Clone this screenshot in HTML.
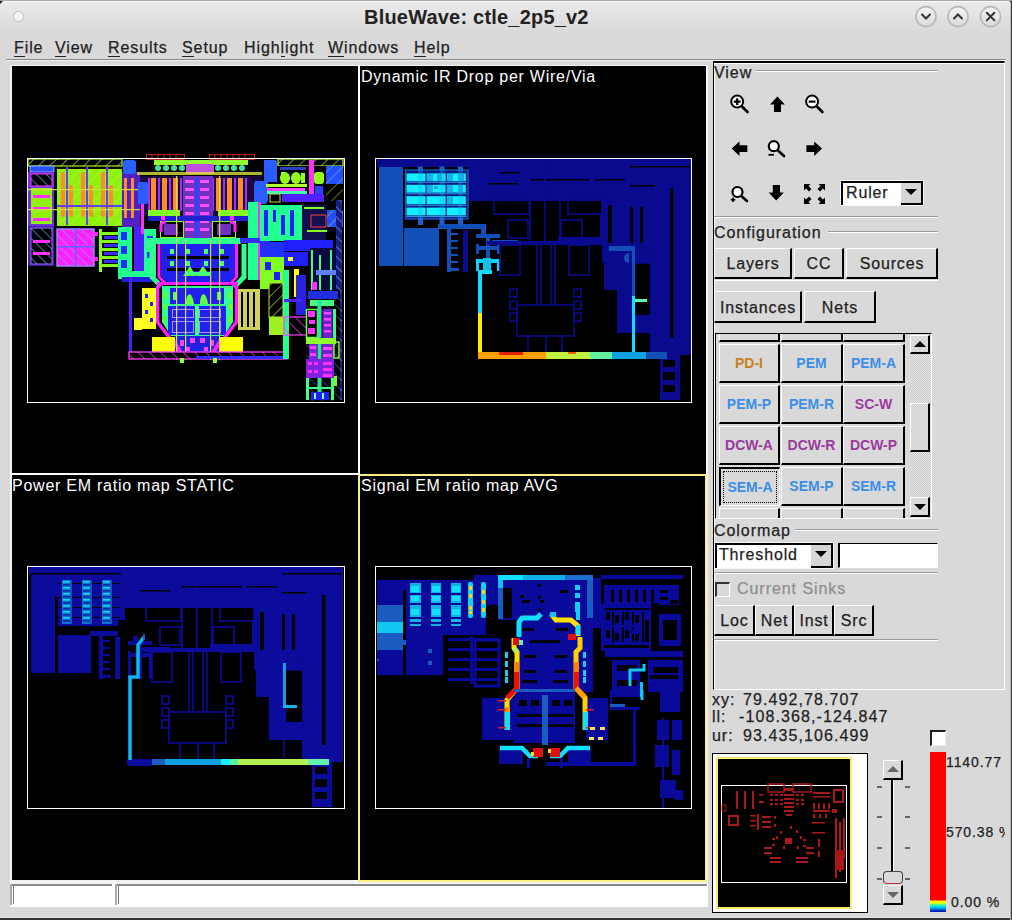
<!DOCTYPE html>
<html><head><meta charset="utf-8">
<style>
*{box-sizing:border-box}
html,body{margin:0;padding:0}
body{width:1012px;height:920px;position:relative;overflow:hidden;background:#d9d9d9;font-family:"Liberation Sans",sans-serif;color:#1e1e1e}
.a{position:absolute}
#title{left:0;top:0;width:1012px;height:35px;background:linear-gradient(#ebebeb,#d8d8d8);border-top-left-radius:6px;border-top-right-radius:6px}
.tb{position:absolute;top:6px;width:21px;height:21px;border-radius:50%;border:1px solid #b4b4b4;background:linear-gradient(#f4f4f4,#dcdcdc)}
.menu{position:absolute;top:39px;font-size:16px;letter-spacing:0.9px;color:#222}
.menu u{text-decoration:none;border-bottom:1.5px solid #222}
.lbl{position:absolute;color:#fff;font-size:16px;letter-spacing:0.75px;white-space:nowrap}

.t{position:absolute;font-size:16px;letter-spacing:0.95px;color:#222;white-space:nowrap;line-height:18px}
.groove{position:absolute;height:2px;border-top:1px solid #9a9a9a;border-bottom:1px solid #fff}
.sep{position:absolute;height:2px;border-top:1px solid #9a9a9a;border-bottom:1px solid #fff}
.btn{position:absolute;background:#d9d9d9;border-top:1px solid #fff;border-left:1px solid #fff;border-right:2px solid #000;border-bottom:2px solid #000;font-size:16px;letter-spacing:0.85px;color:#222;text-align:center;white-space:nowrap;display:flex;align-items:center;justify-content:center;padding-left:1px;padding-top:2px}
.combo{position:absolute;background:#fff;border-top:2px solid #000;border-left:2px solid #000;border-right:2px solid #000;box-shadow:0 0 0 1px #f8f8f8}
.combo span{position:absolute;top:2px;font-size:16px;letter-spacing:0.85px;color:#222;white-space:nowrap}
.dd{position:absolute;right:0;top:0;width:20px;bottom:0;background:#d6d6d6;border-bottom:2px solid #000}
.dd:after{content:"";position:absolute;left:4px;top:6px;border-left:6px solid transparent;border-right:6px solid transparent;border-top:6px solid #000}

.gb{position:absolute;background:#d9d9d9;border-top:1px solid #fff;border-left:1px solid #fff;border-right:2px solid #000;border-bottom:2px solid #000;font-weight:bold;font-size:14px;letter-spacing:0px;display:flex;align-items:center;justify-content:center;white-space:nowrap}
.gb.sunk{border-top:2px solid #000;border-left:2px solid #000;border-right:1px solid #fff;border-bottom:1px solid #fff}
.focus{position:absolute;left:2px;top:2px;right:2px;bottom:2px;border:1px dotted #000}
.trough{background:repeating-conic-gradient(#c4c4c4 0 25%,#ececec 0 50%) 0 0/2px 2px}
.sbb{background:#d9d9d9;border-top:1px solid #fff;border-left:1px solid #fff;border-right:2px solid #000;border-bottom:2px solid #000}
.up:after,.down:after{content:"";position:absolute;left:3px;border-left:6px solid transparent;border-right:6px solid transparent}
.up:after{top:5px;border-bottom:6px solid #000}
.down:after{top:6px;border-top:6px solid #000}
.up.g:after{border-bottom-color:#666}.down.g:after{border-top-color:#666}
.tick{position:absolute;width:5px;height:2px;background:#666}
.t,.btn,.menu,.combo span{-webkit-text-stroke:0.25px currentColor}
</style></head><body>
<div id="title" class="a">
  <div class="a" style="left:13px;top:11px;width:11px;height:11px;border-radius:50%;background:#f6f6f6;border:1.5px solid #bdbdbd"></div>
  <div class="a" style="left:364px;top:6px;font-weight:bold;font-size:20px;letter-spacing:0.2px;color:#222;white-space:nowrap">BlueWave: ctle_2p5_v2</div>
  <svg class="a" style="left:900px;top:0" width="112" height="35" viewBox="900 0 112 35">
 <defs><linearGradient id="bg1" x1="0" y1="0" x2="0" y2="1"><stop offset="0" stop-color="#f6f6f6"/><stop offset="1" stop-color="#dadada"/></linearGradient></defs>
 <g stroke="#b8b8b8" stroke-width="1.6" fill="url(#bg1)">
  <circle cx="926" cy="16.6" r="10"/><circle cx="958" cy="16.6" r="10"/><circle cx="990.6" cy="16.6" r="10"/>
 </g>
 <g stroke="#333" stroke-width="2" fill="none" stroke-linecap="round">
  <path d="M922 14.5 L926 18.5 L930 14.5"/>
  <path d="M954 18.5 L958 14.5 L962 18.5"/>
  <path d="M986.8 12.8 L994.4 20.4 M994.4 12.8 L986.8 20.4"/>
 </g>
</svg>
</div>
<div class="menu" style="left:14px"><u>F</u>ile</div>
<div class="menu" style="left:55px"><u>V</u>iew</div>
<div class="menu" style="left:108px"><u>R</u>esults</div>
<div class="menu" style="left:182px"><u>S</u>etup</div>
<div class="menu" style="left:244px">High<u>l</u>ight</div>
<div class="menu" style="left:328px"><u>W</u>indows</div>
<div class="menu" style="left:414px"><u>H</u>elp</div>
<div class="a" style="left:6px;top:59px;width:1000px;height:1px;background:#8a8a8a"></div>
<div class="a" style="left:6px;top:60px;width:1000px;height:1px;background:#f4f4f4"></div>

<!-- canvas -->
<div class="a" style="left:10px;top:65px;width:698px;height:819px;background:#f4f4f4"></div>
<div class="a" style="left:12px;top:66px;width:694px;height:814px;background:#000"></div>
<div class="a" style="left:358px;top:65px;width:2px;height:409px;background:#fff"></div>
<div class="a" style="left:11px;top:473px;width:349px;height:2px;background:#fff"></div>
<div class="a" style="left:706px;top:65px;width:1px;height:409px;background:#fff"></div>
<div class="a" style="left:358px;top:474px;width:349px;height:408px;border:2px solid #f8f080"></div>
<div class="lbl" style="left:361px;top:68px">Dynamic IR Drop per Wire/Via</div>
<div class="lbl" style="left:12px;top:477px">Power EM ratio map STATIC</div>
<div class="lbl" style="left:361px;top:477px">Signal EM ratio map AVG</div>

<!--CHIP1--><svg class="a" style="left:12px;top:66px" width="346" height="407" viewBox="12 66 346 407">
<defs>
<pattern id="h1" width="8" height="8" patternUnits="userSpaceOnUse" patternTransform="rotate(45)"><rect width="8" height="8" fill="none"/><path d="M0 0v8" stroke="#b0ff30" stroke-width="1.2"/></pattern>
<pattern id="h2" width="7" height="7" patternUnits="userSpaceOnUse" patternTransform="rotate(-45)"><path d="M0 0v7" stroke="#60c0ff" stroke-width="1.2"/></pattern>
<pattern id="h3" width="8" height="8" patternUnits="userSpaceOnUse" patternTransform="rotate(-45)"><path d="M0 0v8" stroke="#ff40ff" stroke-width="1.3"/></pattern>
</defs>
<!-- red outlines above -->
<g fill="none" stroke="#c02020" stroke-width="1">
<rect x="146.5" y="154.5" width="38" height="5"/><rect x="209.5" y="154.5" width="45" height="5"/>
<path d="M152 154v5M158 154v5M164 154v5M170 154v5M176 154v5M215 154v5M221 154v5M227 154v5M233 154v5M239 154v5M245 154v5"/>
</g>
<!-- LEFT TOP BLOCK -->
<rect x="28" y="159" width="94" height="7" fill="#000" stroke="#a0f020" stroke-width="1.2"/>
<rect x="28" y="159" width="94" height="7" fill="url(#h1)"/>
<rect x="30" y="166" width="24" height="6" fill="#2a50ff" stroke="#a0c0ff" stroke-width="0.8"/>
<rect x="28" y="172" width="26" height="54" fill="#7030e0"/>
<rect x="31" y="174" width="21" height="12" fill="#000" stroke="#ff30ff"/>
<rect x="31" y="174" width="21" height="12" fill="url(#h2)"/>
<rect x="31" y="188" width="21" height="36" fill="#90f010"/>
<rect x="33" y="195" width="17" height="3" fill="#ff30ff"/><rect x="33" y="207" width="17" height="3" fill="#ff30ff"/><rect x="33" y="218" width="17" height="3" fill="#ff30ff"/>
<rect x="28" y="226" width="26" height="40" fill="#4020a0"/>
<rect x="31" y="228" width="21" height="36" fill="#000" stroke="#a060ff"/>
<rect x="31" y="228" width="21" height="36" fill="url(#h2)"/>
<rect x="33" y="240" width="17" height="3" fill="#ff30ff"/><rect x="33" y="252" width="17" height="3" fill="#ff30ff"/>
<!-- fingers -->
<rect x="57" y="169" width="65" height="57" fill="#90f010"/>
<rect x="57" y="169" width="65" height="57" fill="url(#h1)"/>
<g fill="#ff8a30">
<rect x="61" y="172" width="4" height="45" rx="2"/><rect x="69" y="185" width="4" height="32" rx="2"/>
<rect x="81" y="172" width="4" height="45" rx="2"/><rect x="89" y="185" width="4" height="32" rx="2"/>
<rect x="101" y="172" width="4" height="45" rx="2"/><rect x="109" y="185" width="4" height="32" rx="2"/>
</g>
<g fill="#6040ff"><rect x="66" y="167" width="2" height="58"/><rect x="86" y="167" width="2" height="58"/><rect x="106" y="167" width="2" height="58"/><rect x="57" y="205" width="65" height="2"/></g>
<rect x="122" y="172" width="18" height="55" fill="#5020c0"/>
<rect x="124" y="178" width="3" height="40" fill="#ff8a30"/><rect x="131" y="178" width="3" height="40" fill="#ff8a30"/>
<rect x="28" y="189" width="112" height="1.2" fill="#d0e040"/><rect x="28" y="209" width="112" height="1.2" fill="#d0e040"/>
<!-- magenta square -->
<rect x="57" y="229" width="37" height="37" fill="#ff20ff" stroke="#a080ff" stroke-width="1.5"/>
<rect x="57" y="229" width="37" height="37" fill="url(#h2)"/>
<rect x="75" y="229" width="1.5" height="37" fill="#6060ff"/><rect x="57" y="246" width="37" height="1.5" fill="#6060ff"/>
<rect x="94" y="232" width="4" height="4" fill="#ff20ff"/><rect x="94" y="257" width="4" height="4" fill="#ff20ff"/>
<!-- horizontal fingers -->
<g fill="#80ff20"><rect x="99" y="229" width="3" height="43"/><rect x="99" y="232" width="20" height="3"/><rect x="99" y="240" width="20" height="3"/><rect x="99" y="248" width="20" height="3"/><rect x="99" y="256" width="20" height="3"/><rect x="99" y="264" width="20" height="3"/></g>
<g fill="#3030ff"><rect x="104" y="236" width="14" height="3"/><rect x="104" y="244" width="14" height="3"/><rect x="104" y="252" width="14" height="3"/><rect x="104" y="260" width="14" height="3"/></g>
<rect x="118" y="227" width="14" height="52" fill="#20ff90"/>
<rect x="121" y="232" width="6" height="8" fill="#2030ff"/><rect x="121" y="246" width="6" height="8" fill="#2030ff"/><rect x="121" y="260" width="6" height="8" fill="#2030ff"/>
<rect x="134" y="227" width="10" height="50" fill="#4a20ff"/>
<rect x="144" y="229" width="12" height="48" fill="#20ff90"/>
<rect x="147" y="236" width="6" height="6" fill="#3030ff"/><rect x="147" y="252" width="6" height="6" fill="#3030ff"/>
<rect x="120" y="271" width="36" height="6" fill="#20ff90"/>
<rect x="122" y="277" width="30" height="5" fill="#2020e0"/>
<!-- CENTER TOP -->
<rect x="123" y="160" width="13" height="14" fill="#2a60ff" rx="3"/>
<rect x="264" y="160" width="13" height="14" fill="#2a60ff" rx="3"/>
<rect x="137" y="160" width="126" height="12" fill="#000"/>
<g fill="#90ff30"><rect x="154" y="160" width="94" height="5"/></g>
<g fill="#40e0a0"><circle cx="158" cy="168" r="3"/><circle cx="166" cy="168" r="3"/><circle cx="174" cy="168" r="3"/><circle cx="182" cy="168" r="3"/><circle cx="218" cy="168" r="3"/><circle cx="226" cy="168" r="3"/><circle cx="234" cy="168" r="3"/><circle cx="242" cy="168" r="3"/></g>
<rect x="186" y="164" width="28" height="10" fill="#c050e0"/>
<rect x="137" y="172" width="126" height="3" fill="#e0e040" opacity="0.8"/>
<rect x="140" y="176" width="122" height="40" fill="#1a0a40"/>
<g fill="#ff8a30"><rect x="151" y="178" width="5" height="33"/><rect x="162" y="178" width="5" height="33"/><rect x="173" y="178" width="5" height="33"/><rect x="216" y="178" width="5" height="33"/><rect x="227" y="178" width="5" height="33"/><rect x="238" y="178" width="5" height="33"/></g>
<g fill="#a030ff"><rect x="148" y="178" width="2" height="33"/><rect x="158" y="178" width="2" height="33"/><rect x="169" y="178" width="2" height="33"/><rect x="180" y="178" width="2" height="33"/><rect x="212" y="178" width="2" height="33"/><rect x="223" y="178" width="2" height="33"/><rect x="234" y="178" width="2" height="33"/><rect x="245" y="178" width="2" height="33"/></g>
<rect x="138" y="182" width="10" height="22" fill="#2a5cff" rx="2"/>
<rect x="254" y="182" width="13" height="22" fill="#2a5cff" rx="2"/>
<rect x="141" y="204" width="3" height="30" fill="#ff30ff"/>
<rect x="183" y="176" width="30" height="63" fill="#7030c0"/>
<g fill="#ff50ff"><rect x="185" y="180" width="9" height="3"/><rect x="200" y="180" width="9" height="3"/><rect x="185" y="188" width="9" height="3"/><rect x="200" y="188" width="9" height="3"/><rect x="185" y="196" width="9" height="3"/><rect x="200" y="196" width="9" height="3"/><rect x="185" y="204" width="9" height="3"/><rect x="200" y="204" width="9" height="3"/><rect x="185" y="212" width="9" height="3"/><rect x="200" y="212" width="9" height="3"/><rect x="185" y="220" width="9" height="3"/><rect x="200" y="220" width="9" height="3"/><rect x="185" y="228" width="9" height="3"/><rect x="200" y="228" width="9" height="3"/></g>
<rect x="195" y="178" width="4" height="64" fill="#3040ff"/>
<rect x="148" y="210" width="32" height="6" fill="#80ff20"/><rect x="218" y="210" width="32" height="6" fill="#80ff20"/>
<rect x="148" y="216" width="100" height="5" fill="#2020d0"/>
<rect x="161" y="216" width="4" height="4" fill="#ff30ff"/><rect x="230" y="216" width="4" height="4" fill="#ff30ff"/>
<rect x="160.5" y="221.5" width="23" height="16" fill="none" stroke="#80ff20"/><rect x="164" y="224" width="14" height="11" fill="#7030c0"/><path d="M161 232 V226 Q161 222 166 222" stroke="#ff20ff" stroke-width="3" fill="none"/>
<rect x="212.5" y="221.5" width="23" height="16" fill="none" stroke="#80ff20"/><rect x="217" y="224" width="14" height="11" fill="#7030c0"/><path d="M235 232 V226 Q235 222 230 222" stroke="#ff20ff" stroke-width="3" fill="none"/>
<!-- OCTAGON -->
<rect x="146" y="238" width="95" height="6" fill="#30ff90"/>
<path d="M161 244 H235 V276 L229 282 H167 L161 276Z" fill="#2020f0"/>
<g fill="#000"><rect x="167" y="256" width="62" height="3"/><rect x="167" y="268" width="62" height="3"/></g>
<g fill="#50ff60"><rect x="170" y="249" width="4" height="5"/><rect x="186" y="249" width="4" height="5"/><rect x="204" y="249" width="4" height="5"/><rect x="220" y="249" width="4" height="5"/><rect x="170" y="261" width="4" height="5"/><rect x="220" y="261" width="4" height="5"/><rect x="186" y="261" width="4" height="5"/><rect x="204" y="261" width="4" height="5"/></g>
<path d="M183 276 L190 266 L196 276 L203 266 L210 276Z" fill="#60ff40"/>
<rect x="185" y="272" width="26" height="3" fill="#40ff80"/>
<path d="M152 244 V277 L160 285 M244 244 V277 L236 285" fill="none" stroke="#30ff90" stroke-width="5"/>
<path d="M159 244 V277 L166 284 M236.5 244 V277 L230 284" fill="none" stroke="#ff20ff" stroke-width="3"/>
<rect x="157" y="282" width="81" height="3" fill="#ff20ff"/>
<path d="M162 286 H233 V322 L224 336 H171 L162 322Z" fill="#30ff90"/>
<rect x="170" y="288" width="54" height="16" fill="#2020f0"/>
<g fill="#60ff40"><path d="M186 304 C186 292 192 290 194 304Z"/><path d="M200 304 C200 292 206 290 208 304Z"/><rect x="173" y="292" width="4" height="8"/><rect x="217" y="292" width="4" height="8"/></g>
<rect x="168" y="306" width="58" height="29" fill="#2020f0"/>
<g fill="none" stroke="#b090ff" stroke-width="1"><rect x="172.5" y="309.5" width="21" height="8"/><rect x="199.5" y="309.5" width="21" height="8"/><rect x="172.5" y="321.5" width="21" height="11"/><rect x="199.5" y="321.5" width="21" height="11"/></g>
<rect x="195" y="304" width="4" height="31" fill="#40ff80"/>
<path d="M157.5 286 V322 L172 341 M236.5 286 V322 L222 341" fill="none" stroke="#ff20ff" stroke-width="3.5"/>
<path d="M163 283 L157.5 288 M231 283 L236.5 288" stroke="#ff20ff" stroke-width="3"/>
<g fill="#60ff40"><rect x="163" y="292" width="4" height="6"/><rect x="163" y="304" width="4" height="6"/><rect x="163" y="316" width="4" height="6"/><rect x="228" y="292" width="4" height="6"/><rect x="228" y="304" width="4" height="6"/><rect x="228" y="316" width="4" height="6"/></g>
<rect x="175" y="336" width="44" height="16" fill="#2020e0"/>
<g fill="#ff40ff"><rect x="180" y="340" width="4" height="6"/><rect x="190" y="338" width="5" height="5"/><rect x="200" y="338" width="5" height="5"/><rect x="210" y="340" width="4" height="6"/><rect x="186" y="347" width="4" height="4"/><rect x="204" y="347" width="4" height="4"/></g>
<path d="M172 338 L181 353 M222 338 L213 353" stroke="#ff20ff" stroke-width="4"/>
<!-- verticals through octagon -->
<g fill="#d0e040"><rect x="176" y="176" width="1.2" height="184"/><rect x="219" y="176" width="1.2" height="184"/><rect x="185" y="240" width="1.2" height="120"/><rect x="210" y="240" width="1.2" height="120"/></g>
<!-- yellow blocks -->
<rect x="142" y="288" width="14" height="41" fill="#ffff20"/>
<g fill="#2020ff"><rect x="145" y="294" width="3" height="4"/><rect x="150" y="302" width="3" height="4"/><rect x="145" y="310" width="3" height="4"/><rect x="150" y="318" width="3" height="4"/></g>
<rect x="134" y="318" width="8" height="12" fill="#ffff20"/>
<rect x="238" y="289" width="22" height="41" fill="#d0d060"/>
<g fill="#000"><rect x="241" y="292" width="2" height="35"/><rect x="247" y="292" width="2" height="35"/><rect x="253" y="292" width="2" height="35"/></g>
<rect x="152" y="337" width="23" height="18" fill="#ffff00"/>
<rect x="220" y="337" width="23" height="18" fill="#ffff00"/>
<rect x="129" y="277" width="3" height="78" fill="#4a20ff"/>
<rect x="129" y="352" width="158" height="7" fill="#000" stroke="#ff40ff" stroke-width="1.3"/>
<rect x="129" y="352" width="158" height="7" fill="url(#h3)"/>
<rect x="196" y="356" width="89" height="3" fill="#3030ff"/>
<rect x="180" y="358" width="4" height="5" fill="#90ff30"/><rect x="213" y="358" width="4" height="5" fill="#90ff30"/>
<!-- RIGHT REGION -->
<rect x="248" y="202" width="10" height="78" fill="#20ff90"/>
<rect x="258" y="202" width="3" height="78" fill="#ff30ff"/>
<rect x="240" y="238" width="30" height="5" fill="#3030ff"/>
<rect x="278" y="159" width="65" height="7" fill="#000" stroke="#b0ff30" stroke-width="1.2"/>
<rect x="278" y="159" width="65" height="7" fill="url(#h1)"/>
<rect x="262" y="166" width="64" height="32" fill="#000"/>
<path d="M264 160 H274 Q277 160 277 166 V182 H264Z" fill="#2a5cff"/>
<rect x="255" y="181" width="13" height="20" fill="#2a5cff"/>
<g fill="#90ff20"><ellipse cx="285" cy="178" rx="5" ry="6"/><ellipse cx="296" cy="178" rx="5" ry="6"/><rect x="281" y="172" width="4" height="4"/><rect x="301" y="173" width="4" height="10"/><rect x="314" y="172" width="10" height="12" rx="3"/></g>
<rect x="280" y="167" width="26" height="3" fill="#2a40c0"/>
<rect x="266" y="184" width="41" height="3" fill="#b0ff30"/>
<rect x="267" y="188" width="38" height="3" fill="#ff40ff"/>
<rect x="267" y="191" width="40" height="3" fill="#40ffb0"/>
<rect x="315" y="186" width="8" height="8" fill="#2a40ff"/>
<rect x="309" y="160" width="5" height="39" fill="#ff30ff"/>
<rect x="282" y="194" width="42" height="8" fill="#5020ff"/>
<rect x="270" y="194" width="10" height="8" fill="none" stroke="#c0e040" stroke-width="1"/>
<rect x="326" y="166" width="17" height="18" fill="#2050ff"/><rect x="326" y="166" width="17" height="18" fill="url(#h1)" opacity="0.6"/>
<rect x="326" y="184" width="17" height="17" fill="url(#h1)" opacity="0.8"/>
<rect x="327" y="210" width="16" height="17" fill="#2050ff"/><rect x="327" y="210" width="16" height="17" fill="url(#h1)" opacity="0.7"/>
<rect x="260" y="205" width="42" height="36" fill="#20ff90"/>
<g fill="#2020ff"><rect x="264" y="210" width="4" height="26"/><rect x="273" y="210" width="3" height="12"/><rect x="281" y="215" width="4" height="20"/><rect x="290" y="210" width="4" height="26"/></g>
<rect x="302" y="205" width="24" height="40" fill="#101050"/>
<rect x="304" y="207" width="20" height="2" fill="#80ff20"/>
<rect x="311" y="215" width="15" height="12" fill="none" stroke="#ff4040" stroke-width="1"/>
<rect x="307" y="230" width="20" height="2" fill="#80ff20"/>
<rect x="284" y="240" width="49" height="11" fill="#2020ff"/>
<rect x="260" y="242" width="24" height="15" fill="#2030ff"/>
<rect x="260" y="257" width="24" height="32" fill="#80ff20"/>
<rect x="265" y="262" width="6" height="8" fill="#2020ff"/><rect x="274" y="272" width="6" height="8" fill="#2020ff"/>
<rect x="284" y="252" width="24" height="14" fill="#2020ff"/>
<rect x="288" y="257" width="5" height="4" fill="#ffff30"/>
<rect x="283" y="270" width="6" height="89" fill="#20ff90"/>
<rect x="294" y="269" width="5" height="28" fill="#ffff00"/>
<rect x="269" y="283" width="14" height="34" fill="#000" stroke="#c0e040"/>
<rect x="269" y="283" width="14" height="34" fill="url(#h1)"/>
<rect x="269" y="317" width="15" height="18" fill="#a0f020"/>
<rect x="284" y="317" width="23" height="18" fill="none" stroke="#ff40ff" stroke-width="1.2"/><rect x="284" y="317" width="23" height="18" fill="url(#h3)"/>
<rect x="296" y="275" width="10" height="40" fill="#2a20e0"/>
<rect x="310" y="248" width="26" height="52" fill="#0a0a40"/>
<g fill="#40ff80"><rect x="311" y="250" width="2" height="50"/><rect x="319" y="255" width="2" height="45"/><rect x="330" y="250" width="2" height="50"/></g>
<rect x="316" y="270" width="22" height="5" fill="#6080ff"/>
<rect x="312" y="282" width="5" height="10" fill="#ff30ff"/>
<rect x="336" y="200" width="6" height="200" fill="#1a1a80"/>
<rect x="336" y="200" width="6" height="200" fill="url(#h2)"/>
<rect x="306" y="290" width="34" height="111" fill="#000"/>
<rect x="306" y="290" width="34" height="111" fill="url(#h2)" opacity="0.6"/>
<rect x="308" y="291" width="30" height="8" fill="#2030e0"/>
<rect x="310" y="300" width="24" height="6" fill="#40ff80"/>
<rect x="306.5" y="309.5" width="11" height="28" fill="#000" stroke="#60ff40" stroke-width="1.5"/>
<g fill="#ff30ff"><rect x="308" y="311" width="7" height="6"/><rect x="309" y="320" width="6" height="4"/><rect x="308" y="328" width="7" height="6"/></g>
<rect x="317.5" y="300" width="4" height="100" fill="#30e0a0"/>
<rect x="322.5" y="309" width="10" height="30" fill="#7020d0"/>
<g fill="#ff40ff"><rect x="324" y="312" width="7" height="2.5"/><rect x="324" y="318" width="7" height="2.5"/><rect x="324" y="324" width="7" height="2.5"/><rect x="324" y="330" width="7" height="2.5"/></g>
<rect x="333" y="309" width="3" height="30" fill="#40ff80"/>
<rect x="306" y="338" width="30" height="6" fill="#90ff30"/>
<rect x="309" y="344" width="8" height="18" fill="#8020e0"/><rect x="310" y="346" width="6" height="3" fill="#ff40ff"/><rect x="310" y="353" width="6" height="3" fill="#ff40ff"/>
<rect x="322" y="344" width="12" height="18" fill="#7020d0"/><rect x="323" y="347" width="9" height="3" fill="#ff40ff"/><rect x="323" y="354" width="9" height="3" fill="#ff40ff"/>
<rect x="334" y="342" width="5" height="16" fill="none" stroke="#80ff20" stroke-width="1.5"/>
<rect x="306" y="359" width="28" height="19" fill="#8020e0"/>
<g fill="#ff30ff"><rect x="308" y="362" width="4" height="3"/><rect x="314" y="362" width="4" height="3"/><rect x="308" y="370" width="4" height="3"/><rect x="314" y="370" width="4" height="3"/><rect x="323" y="362" width="9" height="3"/><rect x="323" y="368" width="9" height="3"/><rect x="323" y="374" width="9" height="3"/></g>
<rect x="306" y="378" width="3" height="22" fill="#40ff80"/><rect x="331" y="378" width="3" height="22" fill="#40ff80"/>
<rect x="309" y="387" width="22" height="2" fill="#40ff80"/>
<rect x="311" y="392" width="18" height="8" fill="#2020f0"/>
<rect x="314" y="393" width="2" height="6" fill="#80ffff"/><rect x="322" y="393" width="2" height="6" fill="#80ffff"/>
<rect x="334" y="376" width="3" height="10" fill="#80ff20"/>
<rect x="284" y="299" width="18" height="3" fill="#5020ff"/>

</svg>
<!--/CHIP1-->
<!--CHIP2--><svg class="a" style="left:360px;top:66px" width="346" height="407" viewBox="360 66 346 407">
<g fill="#0a0a8e">
<rect x="377" y="159" width="314" height="8"/>
<rect x="468" y="159" width="223" height="42"/>
<rect x="650" y="200" width="41" height="155"/>
<rect x="602" y="200" width="49" height="63"/><rect x="617" y="263" width="17" height="70"/><rect x="634" y="315" width="18" height="18"/><rect x="604" y="263" width="13" height="27"/><rect x="635" y="251" width="16" height="12" fill="none" stroke="#0a0a8e" stroke-width="1.5"/>

<rect x="660" y="355" width="20" height="45"/>
<rect x="540" y="159" width="40" height="20"/>
</g>
<g fill="#000">
<rect x="530" y="179" width="60" height="1.5"/><rect x="595" y="179" width="30" height="1.5"/>
<rect x="630" y="166" width="60" height="1.5"/>
<rect x="630" y="185" width="25" height="1.5"/>
<rect x="670" y="188" width="3.5" height="150"/>
<rect x="608" y="205" width="4" height="38"/><rect x="630" y="207" width="3" height="36"/><rect x="640" y="207" width="3" height="36"/>
<rect x="663" y="360" width="12" height="7"/><rect x="663" y="372" width="12" height="8"/><rect x="663" y="385" width="12" height="7"/>
<rect x="488" y="183" width="30" height="1.5"/><rect x="500" y="172" width="20" height="1.5"/>
</g>
<!-- left medium blue blocks -->
<g fill="#1250b8">
<rect x="379" y="167" width="24" height="99"/>
<rect x="404" y="228" width="35" height="38"/>

<rect x="438" y="224" width="48" height="5"/>
<rect x="481" y="224" width="5" height="12"/>
<rect x="447" y="229" width="4" height="43"/>
<rect x="451" y="233" width="7" height="2"/><rect x="451" y="240" width="7" height="2"/><rect x="451" y="247" width="7" height="2"/><rect x="451" y="254" width="7" height="2"/><rect x="451" y="261" width="7" height="2"/><rect x="451" y="268" width="8" height="3"/>
<rect x="476" y="234" width="24" height="4"/>
<rect x="486" y="234" width="4" height="38"/>
<rect x="476" y="246" width="24" height="4"/>
<rect x="476" y="244" width="3" height="10"/><rect x="497" y="244" width="3" height="10"/>
<rect x="492" y="240" width="26" height="4"/>


<rect x="609" y="246" width="26" height="5"/>
<rect x="632" y="246" width="3" height="50"/>
<path d="M629 253 A5 5 0 0 0 629 263Z"/>
<rect x="645" y="352" width="22" height="7"/>
</g>
<rect x="463" y="230" width="5" height="42" fill="#0a0a8e"/>
<!-- cyan grid -->
<rect x="405.5" y="170" width="62.5" height="49" fill="#0a1a80"/>
<rect x="405.5" y="170" width="62.5" height="49" fill="none" stroke="#1a60d0" stroke-width="1.2"/>
<rect x="406.5" y="181.8" width="60" height="1" fill="#3090e0"/>
<rect x="406.5" y="173.4" width="19" height="7.8" fill="#10f0ff"/>
<rect x="426.6" y="173.4" width="19" height="7.8" fill="#10f0ff"/>
<rect x="446.8" y="173.4" width="19" height="7.8" fill="#10f0ff"/>
<rect x="406.5" y="193.2" width="60" height="1" fill="#3090e0"/>
<rect x="406.5" y="184.8" width="19" height="7.8" fill="#10f0ff"/>
<rect x="426.6" y="184.8" width="19" height="7.8" fill="#10f0ff"/>
<rect x="446.8" y="184.8" width="19" height="7.8" fill="#10f0ff"/>
<rect x="406.5" y="204.8" width="60" height="1" fill="#3090e0"/>
<rect x="406.5" y="196.2" width="19" height="8" fill="#10f0ff"/>
<rect x="426.6" y="196.2" width="19" height="8" fill="#10f0ff"/>
<rect x="446.8" y="196.2" width="19" height="8" fill="#10f0ff"/>
<rect x="406.5" y="216.0" width="60" height="1" fill="#3090e0"/>
<rect x="406.5" y="207.6" width="19" height="7.8" fill="#10f0ff"/>
<rect x="426.6" y="207.6" width="19" height="7.8" fill="#10f0ff"/>
<rect x="446.8" y="207.6" width="19" height="7.8" fill="#10f0ff"/>
<rect x="427" y="174" width="6" height="7" fill="#18b0e8"/>
<rect x="437" y="174" width="5" height="7" fill="#18b0e8"/>
<rect x="447" y="174" width="6" height="7" fill="#18b0e8"/>
<rect x="458" y="174" width="6" height="7" fill="#18b0e8"/>
<rect x="427" y="185" width="6" height="7" fill="#18b0e8"/>
<rect x="447" y="185" width="6" height="7" fill="#18b0e8"/>
<rect x="458" y="185" width="5" height="7" fill="#18b0e8"/>
<rect x="447" y="197" width="6" height="7" fill="#18b0e8"/>
<rect x="434" y="186" width="4" height="3" fill="#18b0e8"/>
<rect x="418" y="166.5" width="5" height="4" fill="#1a60d0"/>
<rect x="418" y="218" width="5" height="7" fill="#1a60d0"/>
<rect x="418" y="170" width="5" height="49" fill="#18a8e8" opacity="0.3"/>
<rect x="439.5" y="166.5" width="5" height="4" fill="#1a60d0"/>
<rect x="439.5" y="218" width="5" height="7" fill="#1a60d0"/>
<rect x="439.5" y="170" width="5" height="49" fill="#18a8e8" opacity="0.3"/>
<rect x="458" y="166.5" width="5" height="4" fill="#1a60d0"/>
<rect x="458" y="218" width="5" height="7" fill="#1a60d0"/>
<rect x="458" y="170" width="5" height="49" fill="#18a8e8" opacity="0.3"/>
<!-- cyan stub and cross -->
<rect x="476" y="259" width="24" height="4" fill="#10d0ff"/>
<rect x="476" y="259" width="3" height="12" fill="#10d0ff"/><rect x="497" y="259" width="3" height="12" fill="#10d0ff"/>
<rect x="483" y="258" width="8" height="14" fill="#10c0f0"/>
<rect x="478" y="270" width="14" height="4" fill="#10d8ff"/>
<rect x="478" y="272" width="4" height="41" fill="#10ddff"/>
<rect x="478" y="313" width="4" height="40" fill="#ffee00"/>
<rect x="632" y="296" width="3" height="57" fill="#10ddff"/>
<rect x="635" y="299" width="12" height="3" fill="#60f0b0"/>
<!-- bottom colored wire -->
<rect x="478" y="352" width="68" height="7" fill="#ffa000"/>
<rect x="499" y="352" width="24" height="3" fill="#e02000"/>
<rect x="546" y="352" width="44" height="7" fill="#c0f040"/>
<rect x="568" y="352" width="8" height="2" fill="#ff6000"/>
<rect x="590" y="352" width="22" height="7" fill="#60f0a0"/>
<rect x="612" y="352" width="34" height="7" fill="#10a0e0"/>
<!-- center navy outlines -->
<g fill="none" stroke="#0a0a8e" stroke-width="1.6">
<rect x="494" y="200" width="35" height="14"/>
<rect x="568" y="200" width="34" height="14"/>
<rect x="508" y="220" width="20" height="18"/>
<rect x="561" y="220" width="21" height="18"/>
<rect x="500" y="245" width="20" height="30"/>
<rect x="569" y="245" width="20" height="30"/>
<rect x="517" y="305" width="57" height="31"/>
<rect x="510" y="289" width="7" height="8"/><rect x="510" y="301" width="7" height="8"/><rect x="510" y="313" width="7" height="8"/>
<rect x="574" y="289" width="7" height="8"/><rect x="574" y="301" width="7" height="8"/><rect x="574" y="313" width="7" height="8"/>
<path d="M528 336v16M546 336v16M562 336v16"/>
<path d="M537 244v60M541 244v60M551 244v60M555 244v60"/>
<path d="M530 200v45M560 200v45M545 159v86"/>
</g>
<g fill="#0a0a8e">
<rect x="487" y="241" width="118" height="4"/>
<rect x="558" y="237" width="44" height="7"/>
<rect x="600" y="214" width="3" height="31"/>
</g>
<!-- extra navy details left-middle -->
<rect x="474" y="176" width="20" height="2" fill="#0a0a8e"/>
</svg>
<!--/CHIP2-->
<!--CHIP3--><svg class="a" style="left:12px;top:475px" width="346" height="405" viewBox="360 68 346 405">
<g transform="translate(0,0)">
<g fill="#0c0c9c">
<rect x="377" y="159" width="314" height="8"/>
<rect x="468" y="159" width="223" height="42"/>
<rect x="650" y="200" width="41" height="155"/>
<rect x="602" y="200" width="49" height="63"/><rect x="617" y="263" width="17" height="70"/><rect x="634" y="315" width="18" height="18"/><rect x="604" y="263" width="13" height="27"/><rect x="635" y="251" width="16" height="12" fill="none" stroke="#0a0a8e" stroke-width="1.5"/>

<rect x="660" y="355" width="20" height="45"/>
<rect x="379" y="159" width="90" height="8"/>
<rect x="379" y="167" width="24" height="99"/>
<rect x="404" y="228" width="35" height="38"/>
<rect x="403" y="167" width="70" height="52"/>
<rect x="438" y="224" width="48" height="5"/>
<rect x="481" y="224" width="5" height="12"/>
<rect x="447" y="229" width="4" height="43"/>
<rect x="451" y="233" width="7" height="2"/><rect x="451" y="240" width="7" height="2"/><rect x="451" y="247" width="7" height="2"/><rect x="451" y="254" width="7" height="2"/><rect x="451" y="261" width="7" height="2"/><rect x="451" y="268" width="8" height="3"/>
<rect x="463" y="230" width="5" height="42"/>
<rect x="476" y="234" width="24" height="4"/>
<rect x="486" y="234" width="4" height="38"/>
<rect x="476" y="246" width="24" height="4"/>
<rect x="476" y="244" width="3" height="28"/><rect x="497" y="244" width="3" height="28"/>
<rect x="492" y="240" width="26" height="4"/>
<rect x="609" y="246" width="26" height="5"/>
<rect x="487" y="241" width="118" height="4"/>
<rect x="558" y="237" width="44" height="7"/>
<rect x="600" y="214" width="3" height="31"/>
<rect x="475" y="352" width="25" height="7"/>
</g>
<g fill="#000">
<rect x="379" y="166" width="90" height="1.5"/>
<rect x="403" y="190" width="3" height="76"/>
<rect x="530" y="179" width="60" height="1.5"/><rect x="595" y="179" width="30" height="1.5"/>
<rect x="630" y="166" width="60" height="1.5"/>
<rect x="630" y="185" width="25" height="1.5"/>
<rect x="670" y="188" width="3.5" height="150"/>
<rect x="608" y="205" width="4" height="38"/><rect x="630" y="207" width="3" height="36"/><rect x="640" y="207" width="3" height="36"/>
<rect x="663" y="360" width="12" height="7"/><rect x="663" y="372" width="12" height="8"/><rect x="663" y="385" width="12" height="7"/>
<rect x="488" y="183" width="30" height="1.5"/>
<rect x="406" y="176" width="62" height="1"/><rect x="406" y="190" width="62" height="1"/><rect x="406" y="200" width="62" height="1"/><rect x="406" y="210" width="62" height="1"/>
<rect x="466" y="213" width="21" height="16"/>
</g>
<rect x="410" y="173" width="10" height="44" fill="#1070d0"/>
<rect x="411" y="174" width="8" height="1.6" fill="#10d8f0"/>
<rect x="411" y="177" width="8" height="1.6" fill="#0a2aa0"/>
<rect x="411" y="180" width="8" height="1.6" fill="#10d8f0"/>
<rect x="411" y="183" width="8" height="1.6" fill="#0a2aa0"/>
<rect x="411" y="186" width="8" height="1.6" fill="#10d8f0"/>
<rect x="411" y="189" width="8" height="1.6" fill="#0a2aa0"/>
<rect x="411" y="192" width="8" height="1.6" fill="#10d8f0"/>
<rect x="411" y="195" width="8" height="1.6" fill="#0a2aa0"/>
<rect x="411" y="198" width="8" height="1.6" fill="#10d8f0"/>
<rect x="411" y="201" width="8" height="1.6" fill="#0a2aa0"/>
<rect x="411" y="204" width="8" height="1.6" fill="#10d8f0"/>
<rect x="411" y="207" width="8" height="1.6" fill="#0a2aa0"/>
<rect x="411" y="210" width="8" height="1.6" fill="#10d8f0"/>
<rect x="411" y="213" width="8" height="1.6" fill="#0a2aa0"/>
<rect x="418" y="173" width="2" height="44" fill="#1a50c0"/>
<rect x="430" y="173" width="10" height="44" fill="#1070d0"/>
<rect x="431" y="174" width="8" height="1.6" fill="#10d8f0"/>
<rect x="431" y="177" width="8" height="1.6" fill="#0a2aa0"/>
<rect x="431" y="180" width="8" height="1.6" fill="#10d8f0"/>
<rect x="431" y="183" width="8" height="1.6" fill="#0a2aa0"/>
<rect x="431" y="186" width="8" height="1.6" fill="#10d8f0"/>
<rect x="431" y="189" width="8" height="1.6" fill="#0a2aa0"/>
<rect x="431" y="192" width="8" height="1.6" fill="#10d8f0"/>
<rect x="431" y="195" width="8" height="1.6" fill="#0a2aa0"/>
<rect x="431" y="198" width="8" height="1.6" fill="#10d8f0"/>
<rect x="431" y="201" width="8" height="1.6" fill="#0a2aa0"/>
<rect x="431" y="204" width="8" height="1.6" fill="#10d8f0"/>
<rect x="431" y="207" width="8" height="1.6" fill="#0a2aa0"/>
<rect x="431" y="210" width="8" height="1.6" fill="#10d8f0"/>
<rect x="431" y="213" width="8" height="1.6" fill="#0a2aa0"/>
<rect x="438" y="173" width="2" height="44" fill="#1a50c0"/>
<rect x="450" y="173" width="10" height="44" fill="#1070d0"/>
<rect x="451" y="174" width="8" height="1.6" fill="#10d8f0"/>
<rect x="451" y="177" width="8" height="1.6" fill="#0a2aa0"/>
<rect x="451" y="180" width="8" height="1.6" fill="#10d8f0"/>
<rect x="451" y="183" width="8" height="1.6" fill="#0a2aa0"/>
<rect x="451" y="186" width="8" height="1.6" fill="#10d8f0"/>
<rect x="451" y="189" width="8" height="1.6" fill="#0a2aa0"/>
<rect x="451" y="192" width="8" height="1.6" fill="#10d8f0"/>
<rect x="451" y="195" width="8" height="1.6" fill="#0a2aa0"/>
<rect x="451" y="198" width="8" height="1.6" fill="#10d8f0"/>
<rect x="451" y="201" width="8" height="1.6" fill="#0a2aa0"/>
<rect x="451" y="204" width="8" height="1.6" fill="#10d8f0"/>
<rect x="451" y="207" width="8" height="1.6" fill="#0a2aa0"/>
<rect x="451" y="210" width="8" height="1.6" fill="#10d8f0"/>
<rect x="451" y="213" width="8" height="1.6" fill="#0a2aa0"/>
<rect x="458" y="173" width="2" height="44" fill="#1a50c0"/>
<g fill="none" stroke="#0c0c9c" stroke-width="1.6">
<rect x="494" y="200" width="35" height="14"/>
<rect x="568" y="200" width="34" height="14"/>
<rect x="508" y="220" width="20" height="18"/>
<rect x="561" y="220" width="21" height="18"/>
<rect x="500" y="245" width="20" height="30"/>
<rect x="569" y="245" width="20" height="30"/>
<rect x="517" y="305" width="57" height="31"/>
<rect x="510" y="289" width="7" height="8"/><rect x="510" y="301" width="7" height="8"/><rect x="510" y="313" width="7" height="8"/>
<rect x="574" y="289" width="7" height="8"/><rect x="574" y="301" width="7" height="8"/><rect x="574" y="313" width="7" height="8"/>
<path d="M528 336v16M546 336v16M562 336v16"/>
<path d="M537 244v60M541 244v60M551 244v60M555 244v60"/>
<path d="M530 200v45M560 200v45M545 159v86"/>
<path d="M632 251v100"/>
</g>
<!-- cyan wires -->
<path d="M492 230 L486 238 V270 H478 V353" fill="none" stroke="#10b8f0" stroke-width="3.5"/>
<rect x="491" y="227" width="2" height="6" fill="#1060c0"/>
<rect x="631" y="256" width="3" height="45" fill="#10a0e0"/>
<rect x="631" y="298" width="14" height="3" fill="#10b8f0"/>
<rect x="500" y="352" width="13" height="6" fill="#1a5cc0"/>
<rect x="513" y="352" width="56" height="6" fill="#10a0e0"/>
<rect x="569" y="352" width="9" height="6" fill="#10f0ff"/>
<rect x="578" y="352" width="8" height="6" fill="#60f0a0"/>
<rect x="586" y="352" width="70" height="6" fill="#b0f050"/>
<rect x="656" y="352" width="21" height="6" fill="#60f0b0"/>
</g>
</svg><!--/CHIP3-->
<!--CHIP4--><svg class="a" style="left:360px;top:475px" width="346" height="405" viewBox="360 475 346 405">
<g fill="#0a0a9a">
<rect x="377" y="580" width="26" height="95"/>
<rect x="403" y="580" width="83" height="55"/>
<rect x="404" y="635" width="39" height="40"/>
<rect x="474" y="575" width="26" height="52"/>
<rect x="500" y="578" width="18" height="42"/>
<rect x="518" y="580" width="75" height="112"/>
<rect x="593" y="578" width="8" height="50"/>
<rect x="514" y="689" width="61" height="54"/>
<rect x="482" y="698" width="33" height="42"/>
<rect x="586" y="698" width="22" height="42"/>
<rect x="499" y="747" width="24" height="17"/>
<rect x="568" y="747" width="23" height="17"/>
<rect x="546" y="762" width="90" height="4"/>
<rect x="633" y="680" width="3" height="86"/>
<rect x="448" y="638" width="50" height="3"/><rect x="448" y="648" width="50" height="3"/><rect x="448" y="658" width="50" height="3"/><rect x="448" y="668" width="50" height="3"/><rect x="448" y="678" width="50" height="3"/>
<rect x="470" y="636" width="3" height="48"/>
<rect x="475" y="640" width="24" height="46" fill="none" stroke="#0a0a9a" stroke-width="3"/>
<rect x="601" y="575" width="82" height="4"/>
<rect x="604" y="585" width="75" height="20"/>
<rect x="601" y="604" width="50" height="47"/>
<rect x="659" y="614" width="22" height="32"/>
<rect x="605" y="651" width="78" height="6"/>
<rect x="612" y="660" width="30" height="35"/>
<rect x="648" y="660" width="35" height="32"/>
<rect x="610" y="690" width="30" height="20"/>
<rect x="655" y="680" width="30" height="135" opacity="0"/>
<rect x="660" y="682" width="20" height="30"/>
<rect x="657" y="720" width="12" height="20"/><rect x="672" y="720" width="10" height="20"/>
<rect x="655" y="745" width="14" height="22"/><rect x="672" y="750" width="8" height="25"/>
<rect x="660" y="780" width="16" height="18"/><rect x="675" y="790" width="8" height="10"/>
<rect x="662" y="718" width="2" height="90"/>
</g>
<g fill="#000">
<rect x="611" y="590" width="3" height="12"/><rect x="619" y="590" width="3" height="12"/><rect x="627" y="590" width="3" height="12"/><rect x="635" y="590" width="3" height="12"/><rect x="643" y="590" width="3" height="12"/><rect x="660" y="590" width="8" height="3"/><rect x="660" y="597" width="8" height="3"/>
<rect x="606" y="612" width="4" height="8"/><rect x="615" y="615" width="4" height="8"/><rect x="625" y="612" width="4" height="8"/><rect x="635" y="615" width="4" height="8"/>
<rect x="606" y="630" width="4" height="8"/><rect x="615" y="633" width="4" height="8"/><rect x="625" y="630" width="4" height="8"/><rect x="635" y="633" width="4" height="8"/>
<rect x="617" y="665" width="20" height="6"/><rect x="653" y="667" width="25" height="6"/><rect x="617" y="680" width="20" height="6"/>
<rect x="663" y="620" width="14" height="20"/>
<rect x="520" y="595" width="4" height="3"/><rect x="520" y="615" width="4" height="3"/><rect x="540" y="600" width="4" height="3"/><rect x="530" y="640" width="30" height="3"/><rect x="524" y="655" width="12" height="3"/><rect x="555" y="655" width="12" height="3"/><rect x="524" y="670" width="12" height="3"/><rect x="555" y="670" width="12" height="3"/>
<rect x="519" y="700" width="8" height="6"/><rect x="531" y="700" width="8" height="6"/><rect x="552" y="700" width="8" height="6"/><rect x="564" y="700" width="8" height="6"/>
<rect x="517" y="714" width="56" height="3"/><rect x="517" y="724" width="56" height="3"/>
<rect x="502" y="588" width="10" height="30"/><rect x="522" y="628" width="12" height="3"/><rect x="556" y="628" width="12" height="3"/><rect x="522" y="600" width="8" height="3"/><rect x="560" y="590" width="8" height="3"/><rect x="538" y="584" width="3" height="3"/><rect x="538" y="596" width="3" height="3"/><rect x="538" y="608" width="3" height="3"/><rect x="522" y="680" width="15" height="3"/><rect x="553" y="680" width="15" height="3"/><rect x="543" y="645" width="5" height="40" opacity="0.0"/>
<rect x="403" y="590" width="3" height="85"/>
<rect x="486" y="605" width="14" height="25"/>
</g>
<g fill="#000">
<rect x="651" y="590" width="3" height="12"/><rect x="670" y="600" width="8" height="4"/>
<rect x="605" y="608" width="44" height="2"/>
<rect x="604" y="645" width="45" height="3"/>
<rect x="612" y="612" width="2" height="30"/><rect x="622" y="612" width="2" height="30"/><rect x="632" y="612" width="2" height="30"/><rect x="642" y="612" width="2" height="30"/>
<rect x="645" y="620" width="4" height="22"/>
<rect x="651" y="603" width="8" height="48"/>
<rect x="684" y="575" width="7" height="118"/>
<rect x="612" y="697" width="28" height="10"/>
<rect x="650" y="675" width="28" height="4"/>
<rect x="640" y="660" width="6" height="40"/>
</g>
<g fill="#0a0a9a"><rect x="630" y="630" width="8" height="4"/><rect x="612" y="625" width="30" height="2"/></g>
<rect x="377" y="605" width="26" height="17" fill="#1a5cc0"/>
<rect x="377" y="622" width="26" height="11" fill="#10c8f0"/>
<rect x="377" y="633" width="26" height="17" fill="#1a5cc0"/>
<rect x="402" y="640" width="4" height="5" fill="#1a5cc0"/>
<rect x="377" y="659" width="2" height="2" fill="#1a5cc0"/>
<rect x="428" y="649" width="4" height="4" fill="#1a5cc0"/><rect x="428" y="661" width="4" height="4" fill="#1a5cc0"/>
<!-- stripe columns -->
<g fill="#10b0e0"><rect x="410" y="583" width="11" height="43"/><rect x="431" y="583" width="10" height="43"/><rect x="451" y="583" width="10" height="43"/></g>
<g fill="#10e0f8"><rect x="411" y="586" width="8" height="6"/><rect x="411" y="596" width="8" height="5"/><rect x="411" y="609" width="8" height="6"/><rect x="432" y="586" width="8" height="6"/><rect x="432" y="596" width="8" height="5"/><rect x="432" y="609" width="8" height="6"/><rect x="452" y="586" width="8" height="6"/><rect x="452" y="596" width="8" height="5"/><rect x="452" y="609" width="8" height="6"/></g>
<g fill="#0a0a9a"><rect x="409" y="593" width="53" height="2"/><rect x="409" y="603" width="53" height="2"/><rect x="409" y="617" width="53" height="2"/><rect x="409" y="622" width="53" height="2"/></g>
<!-- yellow dotted columns -->
<rect x="468" y="582" width="5" height="36" rx="2" fill="#10d0f0"/>
<rect x="481" y="582" width="5" height="36" rx="2" fill="#10d0f0"/>
<g fill="#ffd000"><rect x="469" y="586" width="3" height="4"/><rect x="469" y="594" width="3" height="4"/><rect x="469" y="606" width="3" height="4"/><rect x="469" y="611" width="3" height="3"/><rect x="482" y="590" width="3" height="4"/><rect x="482" y="600" width="3" height="4"/><rect x="482" y="608" width="3" height="4"/></g>
<!-- cyan dashes -->
<g fill="#10d0f0"><rect x="505" y="652" width="3" height="6"/><rect x="505" y="661" width="3" height="6"/><rect x="505" y="670" width="3" height="6"/><rect x="505" y="677" width="3" height="6"/><rect x="583" y="652" width="3" height="6"/><rect x="583" y="661" width="3" height="6"/><rect x="583" y="670" width="3" height="6"/><rect x="583" y="677" width="3" height="6"/><rect x="575" y="585" width="5" height="5"/><rect x="575" y="593" width="5" height="5"/><rect x="575" y="602" width="5" height="10"/><rect x="576" y="612" width="4" height="8"/></g>
<!-- top wire -->
<rect x="498" y="575" width="25" height="5" fill="#10e0ff"/>
<rect x="523" y="575" width="42" height="5" fill="#10b0e8"/>
<rect x="565" y="575" width="28" height="5" fill="#1a70d0"/>
<rect x="498" y="580" width="5" height="8" fill="#10c0f0"/>
<rect x="498" y="588" width="5" height="31" fill="#1a5cc0"/>
<rect x="587" y="580" width="6" height="38" fill="#1a5cc0"/>
<!-- octagon wires -->
<path d="M541 614 L537 618 H522 L519 622 V637" fill="none" stroke="#10e0ff" stroke-width="5"/>
<path d="M551 614 L556 620 H571 L578 626 V636" fill="none" stroke="#ffe000" stroke-width="5"/>
<rect x="550" y="612" width="6" height="5" fill="#10c0f0"/>
<rect x="576" y="625" width="4" height="10" fill="#10e0ff"/>
<path d="M514 638 V648 L517 652 V688 L507 700 V730" fill="none" stroke="#ffe000" stroke-width="5"/>
<path d="M514 648 L517 652" stroke="#b0f060" stroke-width="5"/>
<rect x="514" y="662" width="5" height="10" fill="#ff8000"/>
<rect x="514" y="672" width="5" height="18" fill="#ee1000"/>
<path d="M517 688 L507 698" stroke="#ee1000" stroke-width="5"/>
<rect x="505" y="707" width="5" height="8" fill="#ff9000"/>
<rect x="505" y="712" width="5" height="18" fill="#10e0ff"/>
<rect x="513" y="638" width="7" height="7" fill="#e01010"/>
<rect x="519" y="640" width="4" height="5" fill="#60f0c0"/>
<path d="M580 637 V648 L576 652 V688 L585 698 V730" fill="none" stroke="#ffd000" stroke-width="5"/>
<rect x="568" y="634" width="8" height="6" fill="#e01010"/>
<rect x="574" y="662" width="5" height="10" fill="#ff8000"/>
<rect x="574" y="672" width="5" height="17" fill="#ee1000"/>
<path d="M576 688 L585 697" stroke="#ff9a00" stroke-width="5"/>
<rect x="583" y="712" width="5" height="18" fill="#10e0ff"/>
<g fill="#e02020"><rect x="498" y="700" width="8" height="1.5"/><rect x="498" y="709" width="8" height="1.5"/><rect x="498" y="727" width="8" height="1.5"/><rect x="586" y="709" width="8" height="1.5"/><rect x="586" y="727" width="8" height="1.5"/></g>
<rect x="514" y="689" width="61" height="3" fill="#1a5cc0"/>
<rect x="542" y="695" width="6" height="50" fill="#1a5cc0"/>
<g fill="#ffe060"><rect x="590" y="727" width="5" height="3"/><rect x="600" y="727" width="5" height="3"/><rect x="589" y="737" width="5" height="3"/><rect x="598" y="737" width="5" height="3"/></g>
<!-- bottom V wires -->
<path d="M500 748 H522 L530 756 H538 M590 748 H568 L560 756 H550" fill="none" stroke="#10e0ff" stroke-width="4.5"/>
<rect x="533" y="748" width="10" height="9" fill="#e01010"/>
<rect x="550" y="748" width="10" height="9" fill="#e01010"/>
<rect x="531" y="752" width="3" height="4" fill="#ffe000"/><rect x="548" y="749" width="3" height="4" fill="#ffe000"/>
<rect x="527" y="758" width="3" height="10" fill="#0a0a9a"/><rect x="560" y="758" width="3" height="10" fill="#0a0a9a"/>
<!-- right cyan L wires -->
<path d="M630 686 V670 H644 V664" fill="none" stroke="#10c8f0" stroke-width="3"/>
<path d="M642 690 V700" fill="none" stroke="#10c8f0" stroke-width="3"/>
<rect x="640" y="682" width="3" height="15" fill="#10c0f0"/>
<rect x="610" y="704" width="15" height="3" fill="#1a5cc0"/>
</svg>
<!--/CHIP4-->
<!-- chip bboxes -->
<div class="a" style="left:27px;top:158px;width:318px;height:245px;border:1px solid #fff"></div>
<div class="a" style="left:375px;top:158px;width:317px;height:245px;border:1px solid #fff"></div>
<div class="a" style="left:27px;top:566px;width:318px;height:243px;border:1px solid #fff"></div>
<div class="a" style="left:375px;top:566px;width:317px;height:243px;border:1px solid #fff"></div>

<!-- status bar -->
<div class="a" style="left:10px;top:884px;width:698px;height:23px;background:#fff"></div>
<div class="a" style="left:10px;top:884px;width:102px;height:2px;background:#8a8a8a"></div>
<div class="a" style="left:10px;top:884px;width:2px;height:21px;background:#aaa"></div>
<div class="a" style="left:13px;top:885px;width:1px;height:19px;background:#777"></div>
<div class="a" style="left:115px;top:884px;width:592px;height:2px;background:#8a8a8a"></div>
<div class="a" style="left:115px;top:884px;width:2px;height:21px;background:#aaa"></div>
<div class="a" style="left:118px;top:885px;width:1px;height:19px;background:#777"></div>

<div class="a" style="left:0;top:917px;width:1012px;height:1px;background:#e2e2e2"></div><div class="a" style="left:0;top:918px;width:1012px;height:2px;background:#333"></div><div class="a" style="left:1010px;top:0;width:1px;height:920px;background:#bcbcbc"></div><div class="a" style="left:1011px;top:0;width:1px;height:920px;background:#3a3a3a"></div><div class="a" style="left:1006px;top:0;width:6px;height:3px;background:#2a2a2a;clip-path:polygon(0 0,100% 0,100% 100%,90% 100%,40% 0)"></div><div class="a" style="left:0;top:0;width:4px;height:4px;background:#1a1a1a;clip-path:polygon(0 0,100% 0,0 100%)"></div><div class="a" style="left:0;top:0;width:1012px;height:1px;background:#a8a8a8"></div><div class="a" style="left:4px;top:1px;width:1004px;height:1px;background:#fafafa"></div>


<!-- RP -->
<div class="a" style="left:713px;top:61px;width:292px;height:629px;border-top:2px solid #000;border-left:1px solid #000;border-right:1px solid #fff;border-bottom:1px solid #fff"></div>
<div class="a" style="left:714px;top:63px;width:290px;height:1px;background:#fff"></div>
<div class="a" style="left:714px;top:63px;width:1px;height:625px;background:#fff"></div>

<div class="t" style="left:714px;top:64px">View</div>
<div class="groove" style="left:755px;top:70px;width:183px"></div>
<svg class="a" style="left:725px;top:88px" width="105" height="125" viewBox="725 88 105 125">
 <g fill="none" stroke="#000">
  <circle cx="737.2" cy="101.6" r="6" stroke-width="2" fill="#fff"/>
  <path d="M742.5 107 L747.5 112" stroke-width="2.6" stroke-linecap="round"/>
  <path d="M737.2 98.2v6.8M733.8 101.6h6.8" stroke-width="2.2"/>
  <circle cx="812.1" cy="101.6" r="6" stroke-width="2" fill="#fff"/>
  <path d="M817.4 107 L822.4 112" stroke-width="2.6" stroke-linecap="round"/>
  <path d="M808.7 101.6h6.8" stroke-width="2.2"/>
  <circle cx="773.8" cy="146.2" r="5" stroke-width="2.2" fill="#fff"/>
  <path d="M778 150.5 L784 156" stroke-width="2.6" stroke-linecap="round"/>
  <path d="M768.5 154.8h5.5" stroke-width="1.8"/>
  <circle cx="737.5" cy="192" r="5" stroke-width="2.2" fill="#fff"/>
  <path d="M741.5 196.3 L747 201" stroke-width="2.6" stroke-linecap="round"/>
  <path d="M733 197.5v4.5M730.8 199.8h4.5" stroke-width="1.6"/>
 </g>
 <g fill="#000">
  <path d="M777.4 96.5 L784.8 104.5 L781 104.5 L781 112 L774 112 L774 104.5 L770 104.5Z"/>
  <path d="M776.2 200.5 L783.8 192.5 L780 192.5 L780 185 L772.8 185 L772.8 192.5 L768.6 192.5Z"/>
  <path d="M731.7 148.5 L739.5 141.5 L739.5 145.2 L747.3 145.2 L747.3 152 L739.5 152 L739.5 156 Z"/>
  <path d="M822 148.5 L814.2 141.5 L814.2 145.2 L806.4 145.2 L806.4 152 L814.2 152 L814.2 156 Z"/>
  <path d="M804 184 L810.5 184 L808.5 186 L811.5 189 L809 191.5 L806 188.5 L804 190.5Z"/>
  <path d="M825 184 L818.5 184 L820.5 186 L817.5 189 L820 191.5 L823 188.5 L825 190.5Z"/>
  <path d="M804 204 L810.5 204 L808.5 202 L811.5 199 L809 196.5 L806 199.5 L804 197.5Z"/>
  <path d="M825 204 L818.5 204 L820.5 202 L817.5 199 L820 196.5 L823 199.5 L825 197.5Z"/>
 </g>
</svg>
<div class="combo" style="left:841px;top:181px;width:82px;height:24px"><span style="left:3px;top:1px">Ruler</span><div class="dd"></div></div>
<div class="sep" style="left:714px;top:216px;width:224px"></div>

<div class="t" style="left:714px;top:224px">Configuration</div>
<div class="groove" style="left:828px;top:231px;width:110px"></div>
<div class="btn" style="left:714px;top:248px;width:78px;height:31px">Layers</div>
<div class="btn" style="left:794px;top:248px;width:50px;height:31px">CC</div>
<div class="btn" style="left:846px;top:248px;width:92px;height:31px">Sources</div>
<div class="a" style="left:714px;top:280px;width:224px;height:1px;background:#fff"></div>
<div class="btn" style="left:714px;top:291px;width:88px;height:32px">Instances</div>
<div class="btn" style="left:804px;top:291px;width:72px;height:32px">Nets</div>

<div class="a" style="left:715px;top:333px;width:217px;height:186px;background:#d9d9d9;border-top:1px solid #000;border-left:1px solid #000;border-right:1px solid #fff;border-bottom:1px solid #fff;overflow:hidden">
<div class="gb" style="left:3px;top:-4px;width:61px;height:12px"></div>
<div class="gb" style="left:3px;top:174px;width:61px;height:20px"></div>
<div class="gb" style="left:65px;top:-4px;width:62px;height:12px"></div>
<div class="gb" style="left:65px;top:174px;width:62px;height:20px"></div>
<div class="gb" style="left:127px;top:-4px;width:62px;height:12px"></div>
<div class="gb" style="left:127px;top:174px;width:62px;height:20px"></div>
<div class="gb" style="left:3px;top:10px;width:61px;height:39px;color:#c8821e">PD-I</div>
<div class="gb" style="left:65px;top:10px;width:62px;height:39px;color:#3a8ee8">PEM</div>
<div class="gb" style="left:127px;top:10px;width:62px;height:39px;color:#3a8ee8">PEM-A</div>
<div class="gb" style="left:3px;top:51px;width:61px;height:39px;color:#3a8ee8">PEM-P</div>
<div class="gb" style="left:65px;top:51px;width:62px;height:39px;color:#3a8ee8">PEM-R</div>
<div class="gb" style="left:127px;top:51px;width:62px;height:39px;color:#9a3a9e">SC-W</div>
<div class="gb" style="left:3px;top:92px;width:61px;height:39px;color:#9a3a9e">DCW-A</div>
<div class="gb" style="left:65px;top:92px;width:62px;height:39px;color:#9a3a9e">DCW-R</div>
<div class="gb" style="left:127px;top:92px;width:62px;height:39px;color:#9a3a9e">DCW-P</div>
<div class="gb sunk" style="left:3px;top:133px;width:61px;height:39px;color:#3a8ee8"><div class="focus"></div>SEM-A</div>
<div class="gb" style="left:65px;top:133px;width:62px;height:39px;color:#3a8ee8">SEM-P</div>
<div class="gb" style="left:127px;top:133px;width:62px;height:39px;color:#3a8ee8">SEM-R</div>
<div class="a trough" style="left:194px;top:1px;width:21px;height:182px"></div>
<div class="a sbb" style="left:194px;top:1px;width:20px;height:19px"><div class="up"></div></div>
<div class="a sbb" style="left:194px;top:69px;width:20px;height:49px"></div>
<div class="a sbb" style="left:194px;top:163px;width:20px;height:20px"><div class="down"></div></div>
</div>
<div class="t" style="left:714px;top:522px">Colormap</div>
<div class="groove" style="left:795px;top:529px;width:143px"></div>
<div class="combo" style="left:715px;top:543px;width:118px;height:25px"><span style="left:2px;top:1px">Threshold</span><div class="dd"></div></div>
<div class="a" style="left:838px;top:543px;width:100px;height:25px;background:#fff;border-top:1px solid #000;border-left:2px solid #000;border-right:1px solid #fff;border-bottom:1px solid #fff"></div>
<div class="sep" style="left:714px;top:572px;width:224px"></div>
<div class="a" style="left:715px;top:582px;width:15px;height:15px;border-top:2px solid #333;border-left:2px solid #333;border-right:1px solid #fff;border-bottom:1px solid #fff"></div>
<div class="t" style="left:737px;top:580px;color:#8e8e8e">Current Sinks</div>
<div class="btn" style="left:714px;top:605px;width:41px;height:31px">Loc</div>
<div class="btn" style="left:755px;top:605px;width:39px;height:31px">Net</div>
<div class="btn" style="left:794px;top:605px;width:40px;height:31px">Inst</div>
<div class="btn" style="left:834px;top:605px;width:40px;height:31px">Src</div>
<div class="sep" style="left:714px;top:639px;width:224px"></div>

<div class="t" style="left:712px;top:691px">xy:</div><div class="t" style="left:743px;top:691px;letter-spacing:1.1px">79.492,78.707</div>
<div class="t" style="left:712px;top:708px">ll:</div><div class="t" style="left:739px;top:708px;letter-spacing:1.1px">-108.368,-124.847</div>
<div class="t" style="left:712px;top:727px">ur:</div><div class="t" style="left:743px;top:727px;letter-spacing:1.1px">93.435,106.499</div>

<!-- minimap -->
<div class="a" style="left:712px;top:753px;width:156px;height:160px;background:#fff;border:1px solid #000"></div>
<div class="a" style="left:716px;top:757px;width:136px;height:152px;background:#000;border:2px solid #f4ee60"></div>
<div class="a" style="left:721px;top:785px;width:126px;height:98px;border:1px solid #fff"></div><!--MINI--><svg class="a" style="left:718px;top:759px" width="132" height="148" viewBox="718 759 132 148">
<g fill="#a81818">
<rect x="768" y="784" width="16" height="8" fill="none" stroke="#a81818" stroke-width="1.5"/>
<rect x="793" y="784" width="18" height="8" fill="none" stroke="#a81818" stroke-width="1.5"/>
<rect x="784" y="788" width="9" height="3"/>
<rect x="736" y="791" width="2" height="18"/><rect x="744" y="791" width="2" height="18"/><rect x="752" y="791" width="2" height="18"/>
<rect x="759" y="794" width="5" height="1.5"/><rect x="759" y="801" width="5" height="2"/>
<rect x="770" y="794" width="3" height="2"/><rect x="775" y="794" width="3" height="2"/><rect x="780" y="794" width="3" height="2"/>
<rect x="770" y="799" width="3" height="2"/><rect x="775" y="799" width="3" height="2"/><rect x="780" y="799" width="3" height="2"/>
<rect x="770" y="803" width="3" height="2"/><rect x="775" y="803" width="3" height="2"/><rect x="780" y="803" width="3" height="2"/>
<rect x="784" y="794" width="10" height="2"/><rect x="784" y="798" width="10" height="2"/><rect x="784" y="802" width="10" height="2"/><rect x="784" y="806" width="10" height="2"/><rect x="784" y="810" width="10" height="2"/><rect x="786" y="814" width="6" height="2"/>
<rect x="796" y="794" width="3" height="2"/><rect x="801" y="794" width="3" height="2"/><rect x="796" y="799" width="3" height="2"/><rect x="801" y="799" width="3" height="2"/><rect x="796" y="803" width="3" height="2"/><rect x="801" y="803" width="3" height="2"/>
<rect x="813" y="792" width="17" height="2"/><rect x="813" y="796" width="17" height="1.5"/>
<rect x="813" y="803" width="2" height="6"/><rect x="818" y="803" width="2" height="6"/><rect x="823" y="803" width="2" height="6"/><rect x="828" y="803" width="2" height="6"/>
<rect x="813" y="810" width="17" height="2"/><rect x="813" y="814" width="2" height="4"/><rect x="819" y="814" width="2" height="4"/><rect x="825" y="814" width="2" height="4"/>
<rect x="834" y="790" width="9" height="12" fill="none" stroke="#a81818" stroke-width="2"/>
<rect x="832" y="809" width="5" height="4"/>
<rect x="835" y="818" width="2" height="60"/><rect x="839" y="822" width="2" height="50"/><rect x="843" y="818" width="2" height="40"/>
<rect x="836" y="850" width="8" height="20"/>
<rect x="729" y="816" width="9" height="9" fill="none" stroke="#a81818" stroke-width="2"/>
<rect x="722" y="805" width="4" height="6" fill="none" stroke="#a81818" stroke-width="1"/>
<rect x="750" y="815" width="6" height="1.5"/><rect x="750" y="820" width="6" height="1.5"/><rect x="750" y="825" width="6" height="1.5"/><rect x="757" y="814" width="2" height="16"/>
<rect x="762" y="816" width="9" height="2"/><rect x="762" y="821" width="9" height="2"/><rect x="762" y="826" width="9" height="2"/>
<rect x="774" y="816" width="2" height="3"/><rect x="774" y="824" width="2" height="3"/>
<rect x="785" y="838" width="7" height="6"/>
<rect x="780" y="831" width="2" height="3"/><rect x="776" y="836" width="2" height="3"/><rect x="796" y="830" width="2" height="3"/><rect x="800" y="836" width="2" height="3"/>
<rect x="790" y="826" width="2" height="3"/><rect x="783" y="846" width="2" height="3"/><rect x="797" y="846" width="2" height="3"/>
<rect x="772" y="838" width="3" height="2"/><rect x="772" y="844" width="3" height="2"/><rect x="803" y="839" width="3" height="2"/><rect x="803" y="845" width="3" height="2"/>
<rect x="764" y="847" width="8" height="2"/><rect x="764" y="852" width="8" height="2"/>
<rect x="806" y="847" width="8" height="2"/><rect x="806" y="852" width="8" height="2"/>
<rect x="770" y="857" width="11" height="2"/><rect x="770" y="861" width="11" height="2"/>
<rect x="796" y="857" width="12" height="2"/><rect x="796" y="861" width="12" height="2"/>
<rect x="812" y="822" width="13" height="1.5"/><rect x="812" y="832" width="13" height="1.5"/>
<rect x="818" y="839" width="2" height="8"/><rect x="818" y="851" width="2" height="6"/>
</g>
</svg>
<!--/MINI-->

<!-- slider -->
<div class="a" style="left:891px;top:780px;width:2px;height:93px;background:#000"></div>
<div class="a" style="left:893px;top:780px;width:1px;height:93px;background:#fff"></div>
<div class="a sbb" style="left:883px;top:760px;width:20px;height:20px"><div class="up g"></div></div>
<div class="a sbb" style="left:883px;top:885px;width:20px;height:20px"><div class="down g"></div></div>
<div class="a" style="left:883px;top:871px;width:20px;height:13px;background:#d9d9d9;border:1px solid #444;border-radius:4px;border-bottom:1px solid #c03030"></div>
<div class="tick" style="left:877px;top:786px"></div><div class="tick" style="left:905px;top:786px"></div>
<div class="tick" style="left:877px;top:816px"></div><div class="tick" style="left:905px;top:816px"></div>
<div class="tick" style="left:877px;top:847px"></div><div class="tick" style="left:905px;top:847px"></div>
<div class="tick" style="left:877px;top:878px"></div><div class="tick" style="left:905px;top:878px"></div>

<!-- colorbar -->
<div class="a" style="left:930px;top:730px;width:16px;height:16px;background:#fff;border-top:2px solid #222;border-left:2px solid #222;border-right:1px solid #eee;border-bottom:1px solid #eee"></div>
<div class="a" style="left:930px;top:752px;width:16px;height:160px;background:linear-gradient(#f00 0,#f00 148px,#ff0 149px,#ff0 151px,#8f4 152px,#0ee 154px,#0ae 156px,#05c 158px,#00a 160px)"></div>
<div class="a" style="left:946px;top:750px;width:59px;height:165px;overflow:hidden">
<div class="t" style="left:0px;top:3px;font-size:14px;letter-spacing:0.9px">1140.77</div>
<div class="t" style="left:0px;top:73px;font-size:14px;letter-spacing:0.9px">570.38 %</div>
<div class="t" style="left:5px;top:143px;font-size:14px;letter-spacing:0.9px">0.00 %</div></div>
</body></html>
